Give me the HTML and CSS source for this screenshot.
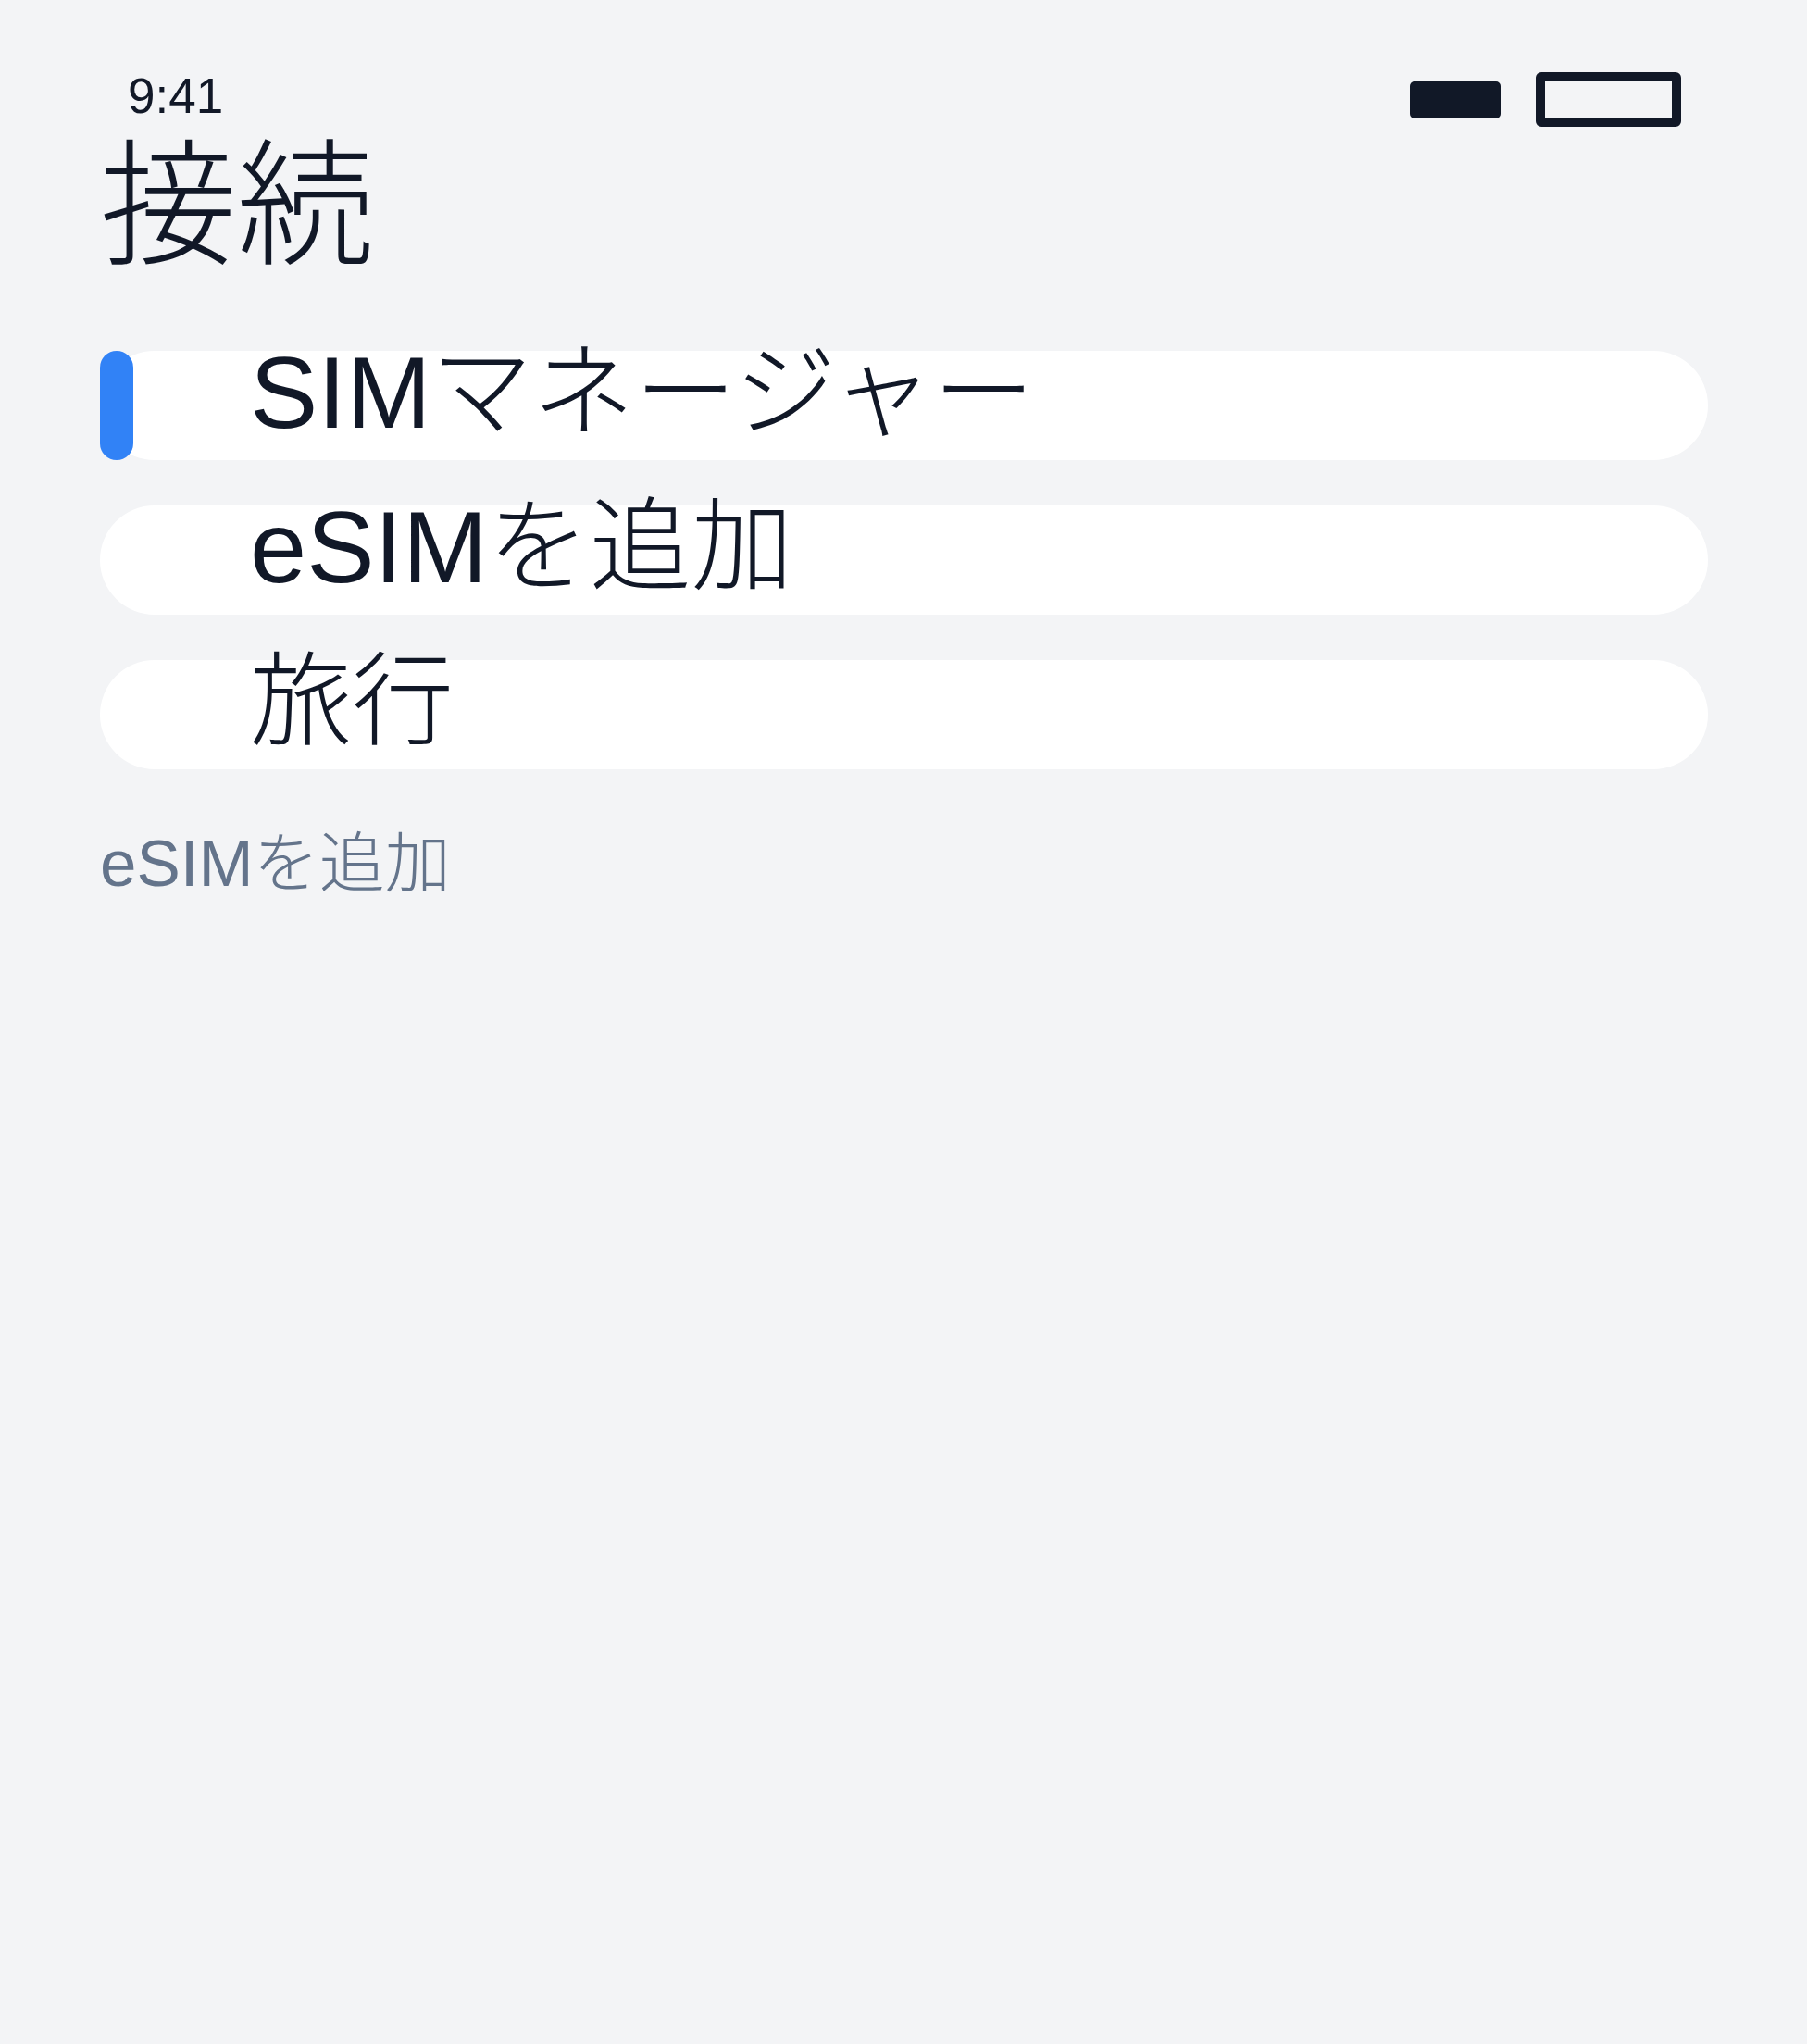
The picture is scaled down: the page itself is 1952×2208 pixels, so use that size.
FILE: index.html
```html
<!DOCTYPE html>
<html lang="ja">
<head>
<meta charset="utf-8">
<title>接続</title>
<link rel="stylesheet" href="styles.css">
</head>
<body>
<div class="screen">
  <div class="status">
    <span class="time">9:41</span>
    <div class="status-icons">
      <span class="signal"></span>
      <span class="battery"></span>
    </div>
  </div>
  <h1 class="title">接続</h1>
  <div class="list">
    <div class="row active"><span class="bar"></span><span class="label">SIMマネージャー</span></div>
    <div class="row"><span class="label">eSIMを追加</span></div>
    <div class="row"><span class="label">旅行</span></div>
  </div>
  <p class="footer">eSIMを追加</p>
</div>
</body>
</html>
```

FILE: styles.css
```css
html, body {
  margin: 0;
  padding: 0;
  background: #f3f4f6;
}
body {
  font-family: "Liberation Sans", "Noto Sans CJK JP", sans-serif;
  font-weight: 300;
  color: #111827;
  width: 1952px;
  height: 2208px;
}
.screen {
  padding: 0 107px 0 108px;
}
.status {
  display: flex;
  justify-content: space-between;
  align-items: flex-start;
  padding: 70px 29px 0 30px;
}
.time {
  font-size: 53px;
  line-height: 68px;
  font-weight: 400;
}
.status-icons {
  display: flex;
  align-items: center;
  gap: 38px;
  margin-top: 8px;
}
.signal {
  width: 98px;
  height: 40px;
  background: #111827;
  border-radius: 5px;
}
.battery {
  width: 137px;
  height: 39px;
  border: 10px solid #111827;
  border-radius: 6px;
}
.title {
  margin: 0;
  font-size: 148px;
  font-weight: 300;
  line-height: 170px;
}
.list {
  display: flex;
  flex-direction: column;
  gap: 49px;
  margin-top: 71px;
}
.row {
  display: flex;
  align-items: flex-start;
  height: 118px;
  background: #ffffff;
  border-radius: 59px;
  padding-left: 162px;
}
.row.active {
  padding-left: 0;
}
.bar {
  width: 36px;
  height: 118px;
  border-radius: 18px;
  background: #3182f6;
  margin-right: 126px;
  flex: none;
}
.label {
  font-size: 110px;
  line-height: 90px;
  white-space: nowrap;
}
.footer {
  margin: 52px 0 0;
  font-size: 71px;
  line-height: 100px;
  color: #64748b;
}
```
